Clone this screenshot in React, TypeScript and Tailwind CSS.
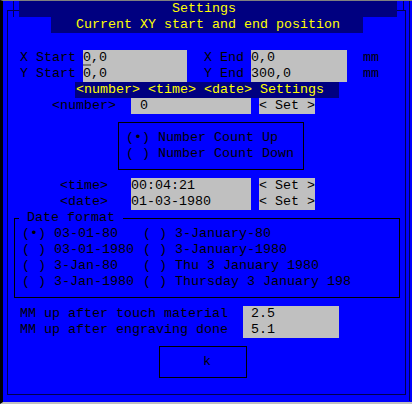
import React from 'react'

const gray = 'bg-[#c0c0c0]'

function Gray({ w, children, pad = '' }: { w: string; children?: React.ReactNode; pad?: string }): JSX.Element {
  return <span className={`${w} ${gray} ${pad} h-4 whitespace-pre`}>{children}</span>
}

function SetButton(): JSX.Element {
  return <span className={`w-[56px] h-4 ${gray} whitespace-pre`}>{'< Set >'}</span>
}

const dateFormats: [string, string][] = [
  ['(•) 03-01-80', '( ) 3-January-80'],
  ['( ) 03-01-1980', '( ) 3-January-1980'],
  ['( ) 3-Jan-80', '( ) Thu 3 January 1980'],
  ['( ) 3-Jan-1980', '( ) Thursday 3 January 198']
]

export default function App(): JSX.Element {
  return (
    <div className="relative w-[412px] h-[404px] overflow-hidden box-border bg-[#0000ff] border-l-[3px] border-l-black border-t border-t-[#808080] border-b-2 border-b-[#c0c0c0] text-black font-['Liberation_Mono',monospace] text-[13.33px] leading-4">
      {/* window frame lines */}
      <div className="absolute left-[4px] top-[9px] right-[6px] bottom-[7px] border border-[#000050]" />
      <div className="absolute left-[10px] top-0 h-4 w-px bg-[#000050]" />
      <div className="absolute left-[400px] top-0 h-[9px] w-px bg-[#000050]" />
      <div className="absolute left-[406px] top-0 bottom-[1px] w-px bg-[#000050]" />

      {/* title */}
      <div className="relative h-4 ml-[16px] w-[378px] bg-[#000080] text-[#ffff00] pl-[153px] whitespace-pre">Settings</div>
      <div className="relative h-4 ml-[48px] w-[312px] bg-[#000080] text-[#ffff00] pl-[25px] whitespace-pre">
        Current XY start and end position
      </div>

      <div className="h-[17px]" />

      {/* XY positions */}
      <div className="flex h-4 ml-[17px]">
        <span className="w-[63px] whitespace-pre">X Start</span>
        <Gray w="w-[104px]">
          <span className="underline decoration-[#7a7a7a] decoration-2 underline-offset-[3px]">0</span>,0
        </Gray>
        <span className="w-[17px]" />
        <span className="w-[47px] whitespace-pre">X End</span>
        <Gray w="w-[96px]">0,0</Gray>
        <span className="w-[16px]" />
        <span>mm</span>
      </div>
      <div className="flex h-4 ml-[17px]">
        <span className="w-[63px] whitespace-pre">Y Start</span>
        <Gray w="w-[104px]">0,0</Gray>
        <span className="w-[17px]" />
        <span className="w-[47px] whitespace-pre">Y End</span>
        <Gray w="w-[96px]">300,0</Gray>
        <span className="w-[16px]" />
        <span>mm</span>
      </div>

      {/* section heading */}
      <div className="h-4 ml-[72px] w-[264px] bg-[#000080] text-[#ffff00] pl-px whitespace-pre">
        {'<number> <time> <date> Settings'}
      </div>

      {/* number */}
      <div className="flex h-4 ml-[49px]">
        <span className="w-[79px]">{'<number>'}</span>
        <Gray w="w-[120px]" pad="pl-[9px]">0</Gray>
        <span className="w-2" />
        <SetButton />
      </div>

      <div className="mt-2 ml-[115px] w-[186px] h-[48px] border border-black pt-[7px] pl-[7px] whitespace-pre">
        <div className="h-4">(•) Number Count Up</div>
        <div className="h-4">( ) Number Count Down</div>
      </div>

      {/* time / date */}
      <div className="mt-2 flex h-4 ml-[57px]">
        <span className="w-[71px]">{'<time>'}</span>
        <Gray w="w-[120px]">00:04:21</Gray>
        <span className="w-2" />
        <SetButton />
      </div>
      <div className="flex h-4 ml-[57px]">
        <span className="w-[71px]">{'<date>'}</span>
        <Gray w="w-[120px]">01-03-1980</Gray>
        <span className="w-2" />
        <SetButton />
      </div>

      {/* date format group */}
      <div className="relative mt-2 ml-[11px] w-[386px] h-[80px] border border-black pt-[7px] pl-[7px]">
        <span className="absolute -top-[9px] left-[4px] h-4 px-2 bg-[#0000ff] whitespace-pre">Date format</span>
        {dateFormats.map(([a, b]) => (
          <div key={a} className="grid grid-cols-[121px_1fr] h-4 whitespace-pre">
            <span>{a}</span>
            <span>{b}</span>
          </div>
        ))}
      </div>

      {/* MM up */}
      <div className="mt-2 flex h-4 ml-[17px]">
        <span className="w-[223px] whitespace-pre">MM up after touch material</span>
        <Gray w="w-[96px]" pad="pl-2">2.5</Gray>
      </div>
      <div className="flex h-4 ml-[17px]">
        <span className="w-[223px] whitespace-pre">MM up after engraving done</span>
        <Gray w="w-[96px]" pad="pl-2">5.1</Gray>
      </div>

      {/* Ok button */}
      <div className="mt-2 ml-[156px] w-[88px] h-[32px] border border-black flex items-center justify-center">
        <span>
          <span className="text-[#0000ff]">O</span>k
        </span>
      </div>
    </div>
  )
}
